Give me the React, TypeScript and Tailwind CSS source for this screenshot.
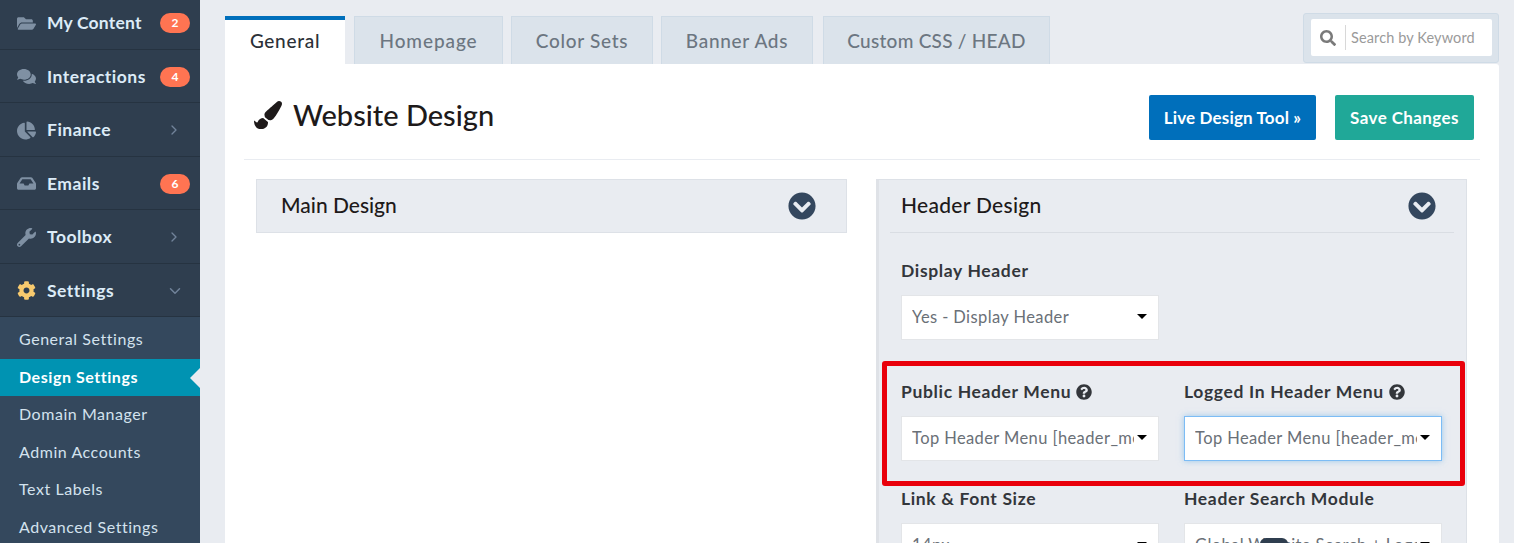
import { ChevronDown, ChevronRight } from 'lucide-react';
import {
  FaChartPie,
  FaChevronCircleDown,
  FaCog,
  FaComments,
  FaFolderOpen,
  FaInbox,
  FaPaintBrush,
  FaQuestionCircle,
  FaSearch,
  FaWrench,
} from 'react-icons/fa';
import type { ComponentType } from 'react';

interface NavItem {
  label: string;
  icon: ComponentType<{ className?: string }>;
  badge?: string;
  arrow?: 'right' | 'down';
}

const navItems: NavItem[] = [
  { label: 'My Content', icon: FaFolderOpen, badge: '2' },
  { label: 'Interactions', icon: FaComments, badge: '4' },
  { label: 'Finance', icon: FaChartPie, arrow: 'right' },
  { label: 'Emails', icon: FaInbox, badge: '6' },
  { label: 'Toolbox', icon: FaWrench, arrow: 'right' },
  { label: 'Settings', icon: FaCog, arrow: 'down' },
];

const subItems = ['General Settings', 'Design Settings', 'Domain Manager', 'Admin Accounts', 'Text Labels', 'Advanced Settings'];

const tabs = [
  { label: 'Homepage', width: 'w-[149px]', tracking: 'tracking-[0.9px]' },
  { label: 'Color Sets', width: 'w-[142px]', tracking: 'tracking-[0.7px]' },
  { label: 'Banner Ads', width: 'w-[152px]', tracking: 'tracking-[0.7px]' },
  { label: 'Custom CSS / HEAD', width: 'ml-[2px] w-[227px]', tracking: 'tracking-[0.25px]' },
];

function Sidebar() {
  return (
    <aside className="w-[200px] shrink-0 bg-[#2f3e4f] -mt-1">
      {navItems.map((item) => {
        const Icon = item.icon;
        return (
          <div key={item.label} className="flex h-[53.5px] items-center border-b border-[#263341] pl-[14px] pr-[10px] pt-[2px]">
            <span className="flex w-[33px] justify-center pr-[9px]">
              <Icon className={`text-[19px] ${item.label === 'Settings' ? 'text-[#f8ca6e]' : 'text-[#7f90a3]'}`} />
            </span>
            <span className={`flex-1 text-[17.5px] font-bold text-[#dcebf7] ${item.label === 'My Content' ? 'tracking-[0.2px]' : 'tracking-[0.5px]'}`}>
              {item.label}
            </span>
            {item.badge && (
              <span className="flex h-[20px] w-[30px] items-center justify-center rounded-full bg-[#ff7452] text-[12px] font-bold text-white">
                {item.badge}
              </span>
            )}
            {item.arrow === 'right' && <ChevronRight className="mr-[8px] h-[16px] w-[16px] text-[#71839a]" />}
            {item.arrow === 'down' && <ChevronDown className="mr-[6px] h-[18px] w-[18px] text-[#71839a]" />}
          </div>
        );
      })}
      <div className="bg-[#34485d] pt-[4px] pb-[40px]">
        {subItems.map((label) => {
          const active = label === 'Design Settings';
          return (
            <div
              key={label}
              className={`relative flex h-[37.5px] items-center pb-[1px] pl-[19px] text-[16px] tracking-[0.55px] ${active ? 'bg-[#0093b2] font-bold text-white' : 'text-[#d3e2ee]'}`}
            >
              {label}
              {active && (
                <span className="absolute right-0 top-[9px] h-0 w-0 border-y-[10px] border-r-[10px] border-y-transparent border-r-[#e9ecf1]" />
              )}
            </div>
          );
        })}
      </div>
    </aside>
  );
}

function Tabs() {
  return (
    <div className="flex h-[64px] items-start justify-between pt-[13px]">
      <div className="mt-[3px] flex gap-[8px]">
        <div className="mr-px flex h-[48px] w-[120px] items-center justify-center border-t-[4px] border-[#006fbb] bg-white pb-[1px] text-[19px] font-medium tracking-[0.7px] text-[#2c3138]">
          General
        </div>
        {tabs.map((tab) => (
          <div
            key={tab.label}
            className={`flex h-[48px] items-center justify-center border border-b-0 border-[#cfdbe6] bg-[#dbe3eb] pt-[2px] text-[19px] font-medium text-[#6c7681] ${tab.width} ${tab.tracking}`}
          >
            {tab.label}
          </div>
        ))}
      </div>
      <div className="h-[50px] w-[196px] rounded-[3px] border border-[#cfdbe6] bg-[#dbe3eb] pl-[7px] pr-[6px] pt-[5px]">
        <div className="flex h-[37px] items-center rounded-[2px] bg-white pl-[9px]">
          <FaSearch className="text-[16px] text-[#7a7a7a]" />
          <span className="ml-[9px] border-l border-[#d8d8d8] pl-[5px] text-[14.5px] leading-[25px] tracking-[0.12px] text-[#9a9a9a]">Search by Keyword</span>
        </div>
      </div>
    </div>
  );
}

function Field({ label, value, help, focus, className }: { label: string; value: string; help?: boolean; focus?: boolean; className?: string }) {
  return (
    <div className={className}>
      <div className="flex h-[24px] items-center gap-[5px] text-[17.5px] font-bold tracking-[0.65px] text-[#33363b]">
        {label}
        {help && <FaQuestionCircle className="text-[16px] text-[#33363b]" />}
      </div>
      <div
        className={`mt-[12px] flex h-[45px] w-[258px] items-center justify-between border bg-white pl-[10px] pr-[11px] ${focus ? 'border-[#7cbcf5] shadow-[0_0_6px_rgba(102,175,233,0.6)]' : 'border-[#e3e5e8]'}`}
      >
        <span className="w-[222px] overflow-hidden whitespace-nowrap text-[16.5px] tracking-[0.4px] text-[#6a7077]">{value}</span>
        <span className="mb-[2px] h-0 w-0 border-x-[5px] border-t-[5px] border-x-transparent border-t-black" />
      </div>
    </div>
  );
}

function HeaderDesign() {
  return (
    <div className="relative h-[400px] w-[591px] border border-[#dde1e7] border-l-[3px] border-l-[#dfe2e7] bg-[#e9ecf1] pl-[11px] pr-[12px]">
      <div className="flex h-[53px] items-center justify-between border-b border-[#d9dde3] pl-[11px] pr-[18px]">
        <span className="pb-[2px] text-[21px] font-medium tracking-[0.3px] text-[#1e1a1a]">Header Design</span>
        <FaChevronCircleDown className="text-[28px] text-[#34475e]" />
      </div>
      <div className="pl-[11px] pt-[26px]">
        <Field label="Display Header" value="Yes - Display Header" />
        <div className="mt-[40px] flex gap-[25px]">
          <Field label="Public Header Menu" value="Top Header Menu [header_menu]" help />
          <Field label="Logged In Header Menu" value="Top Header Menu [header_menu]" help focus />
        </div>
        <div className="mt-[26px] flex gap-[25px]">
          <Field label="Link & Font Size" value="14px" />
          <Field label="Header Search Module" value="Global Website Search + Logo" />
        </div>
      </div>
      {/* red annotation drawn over the form */}
      <div className="absolute left-[3px] top-[181px] h-[125px] w-[583px] rounded-[3px] border-[5px] border-[#e9000b]" />
      <div className="absolute left-[381px] top-[358px] h-[12px] w-[28px] rounded-full bg-[#2f3e4f]" />
    </div>
  );
}

export default function App() {
  return (
    <div className="flex h-[543px] w-[1514px] overflow-hidden bg-[#e9ecf1] font-['Lato','Open_Sans',sans-serif]">
      <Sidebar />
      <main className="ml-[25px] w-[1274px] shrink-0">
        <Tabs />
        <section className="h-[479px] rounded-tr-[3px] bg-white px-[19px]">
          <div className="flex h-[96px] items-start justify-between border-b border-[#e9ecf1] pl-[10px] pr-[6px] pt-[31px]">
            <h1 className="flex h-[39px] items-center gap-[11px] text-[29px] font-medium text-[#1e1a1a]">
              <FaPaintBrush className="text-[28px]" />
              Website Design
            </h1>
            <div className="flex gap-[19px]">
              <button className="h-[45px] w-[167px] rounded-[2px] bg-[#006fbb] text-[17px] font-bold tracking-[0.15px] text-white">Live Design Tool »</button>
              <button className="h-[45px] w-[139px] rounded-[2px] bg-[#20a898] text-[17px] font-bold tracking-[0.4px] text-white">Save Changes</button>
            </div>
          </div>
          <div className="mt-[19px] flex items-start gap-[29px] pl-[12px]">
            <div className="flex h-[54px] w-[591px] items-center justify-between border border-[#dde1e7] bg-[#e9ecf1] pl-[24px] pr-[30px] text-[21px] font-medium text-[#1e1a1a]">
              <span className="pb-[2px]">Main Design</span>
              <FaChevronCircleDown className="text-[28px] text-[#34475e]" />
            </div>
            <HeaderDesign />
          </div>
        </section>
      </main>
    </div>
  );
}
